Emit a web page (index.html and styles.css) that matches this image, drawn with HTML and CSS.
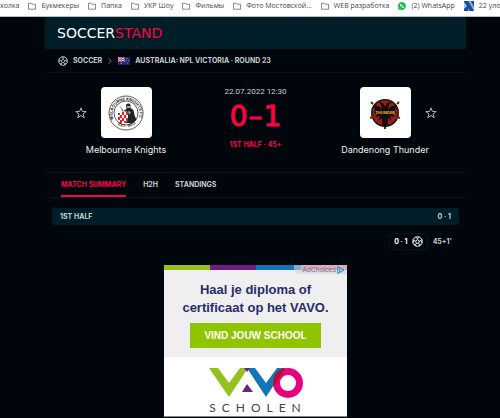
FILE: index.html
```html
<!DOCTYPE html>
<html lang="en">
<head>
    <meta charset="UTF-8">
    <meta name="viewport" content="width=device-width, initial-scale=1.0">
    <title>Melbourne Knights - Dandenong Thunder</title>
    <link rel="stylesheet" href="styles.css">
</head>
<body>
    <!-- Shared icons -->
    <svg class="sprite" width="0" height="0" aria-hidden="true">
        <symbol id="folder" viewBox="0 0 8 8">
            <path d="M.5 1.2h2.6l.8 1h3.6v5H.5z" fill="none" stroke="#6b6e72" stroke-width=".8"/>
        </symbol>
        <symbol id="ball" viewBox="0 0 24 24">
            <g fill="none" stroke="currentColor" stroke-width="2">
                <circle cx="12" cy="12" r="10.5"/>
                <path d="M12 8l4 3-1.5 5h-5L8 11zM12 8V5M16 11l3-1M14.500 16l2 3M9.500 16l-2 3M8 11l-3-1M8 3l4 2 4-2M22 8l-3 2 3 5M19 18l-2.500 1-1.500 3M9 22l-1.500-3L5 18M2 15l3-5-3-2"/>
            </g>
        </symbol>
        <symbol id="star" viewBox="0 0 12 12">
            <path d="M6 .8l1.300 3.600 3.900.1-3.100 2.400 1.100 3.800L6 8.500l-3.200 2.200 1.100-3.800L.8 4.500l3.900-.1z" fill="none" stroke="#c3c9cb" stroke-width=".9"/>
        </symbol>
    </svg>

    <!-- Bookmarks -->
    <nav class="bookmarks">
        <a href="#">холка</a>
        <a href="#"><svg class="folder"><use href="#folder"/></svg>Букмекеры</a>
        <a href="#"><svg class="folder"><use href="#folder"/></svg>Папка</a>
        <a href="#"><svg class="folder"><use href="#folder"/></svg>УКР Шоу</a>
        <a href="#"><svg class="folder"><use href="#folder"/></svg>Фильмы</a>
        <a href="#"><svg class="folder"><use href="#folder"/></svg>Фото Мостовской...</a>
        <a href="#"><svg class="folder"><use href="#folder"/></svg>WEB разработка</a>
        <a href="#">
            <svg class="folder" viewBox="0 0 16 16">
                <path d="M8 0a8 8 0 1 1-4 15L0 16l1-4A8 8 0 0 1 8 0z" fill="#18c04f"/>
                <path d="M5 4l1.500 0 1 2.200-.8 1.100c.6 1 1.400 1.700 2.400 2.200l1-1 2.100 1.200c0 1.600-1.300 2.300-2.600 2C7 11 4.500 8.500 4 6.200 4 5.200 4.500 4.400 5 4z" fill="#fff"/>
            </svg>(2) WhatsApp</a>
        <a href="#">
            <svg class="site-icon" viewBox="0 0 10 10">
                <path d="M0 0h10v10H0z" fill="#7fa6d6"/>
                <path d="M0 0h4l6 10H6L4 7v3H0V5l1 0zM7 0h3v6z" fill="#174c9a"/>
                <path d="M0 1l3 4-3 3z" fill="#a9c6e8"/>
            </svg>22 улов</a>
    </nav>

    <div class="page">
        <header class="site-header">
            <a class="logo" href="#">SOCCER<span>STAND</span></a>
        </header>

        <nav class="breadcrumb">
            <svg class="ball-small"><use href="#ball"/></svg>
            <a href="#">SOCCER</a>
            <svg class="chevron" viewBox="0 0 4 6"><path d="M.5.5L3.300 3 .5 5.500" fill="none" stroke="#8b9599" stroke-width=".8"/></svg>
            <svg class="flag" viewBox="0 0 11 7">
                <path d="M0 0h11v7H0z" fill="#272a72"/>
                <path d="M0 0l6 4M6 0L0 4" stroke="#ddd" stroke-width=".9"/>
                <path d="M3 0v4M0 2h6" stroke="#fff" stroke-width="1.500"/>
                <path d="M3 0v4M0 2h6" stroke="#e02f48" stroke-width=".8"/>
                <path d="M2.500 5h1v1h-1zM8 1h.7v.7H8zM9.500 2.500h.7v.7h-.7zM7 3h.7v.7H7zM8.200 5.200h.7v.7h-.7z" fill="#c9cbe0"/>
            </svg>
            <a href="#">AUSTRALIA: NPL VICTORIA · ROUND 23</a>
        </nav>

        <!-- Match -->
        <main>
            <section class="match">
                <div class="team">
                    <div class="team-row">
                        <button class="favourite" aria-label="Add Melbourne Knights"><svg><use href="#star"/></svg></button>
                        <div class="crest">
                            <svg viewBox="0 0 36 36">
                                <defs><path id="ring" d="M5.500 24A13.500 13.500 0 1 1 30.500 24"/><path id="ring-low" d="M5 25A15.500 15.500 0 0 0 31 25"/></defs>
                                <circle cx="18" cy="18" r="17" fill="#fff" stroke="#333" stroke-width=".8"/>
                                <circle cx="18" cy="18" r="12" fill="none" stroke="#333" stroke-width=".8"/>
                                <text font-size="4" font-weight="700" fill="#222"><textPath href="#ring">MELBOURNE KNIGHTS FC</textPath></text>
                                <text font-size="4" font-weight="700" fill="#222"><textPath href="#ring-low" startOffset="22%">EST. 1953</textPath></text>
                                <path d="M18 10c1-2 4-2 4.500 0v3l3 2 1 5 2 5-4 3h-7l1-7-3-3-4-8 4 6 3-2z" fill="#222"/>
                                <path d="M19 11h3v2h-3zM20 16l3 1-2 3z" fill="#aaa"/>
                                <path d="M10 18q5-3 10-1v8q-2 3-5 4-5-3-5-6z" fill="#fff"/>
                                <path d="M10 18h2v2h-2zM14 17h2v3h-2zM18 17h2v3h-2zM12 20h2v3h-2zM16 20h2v3h-2zM10 22h2v3h-2zM14 23h2v3h-2zM18 23h2v3h-2zM12 25h2v3h-2zM16 26h2v2h-2z" fill="#e2202b"/>
                            </svg>
                        </div>
                    </div>
                    <a href="#">Melbourne Knights</a>
                </div>

                <div class="result">
                    <time datetime="2022-07-22T12:30">22.07.2022 12:30</time>
                    <div class="score"><span>0</span><span>–</span><span>1</span></div>
                    <p>1ST HALF · 45+</p>
                </div>

                <div class="team away">
                    <div class="team-row">
                        <button class="favourite" aria-label="Add Dandenong Thunder"><svg><use href="#star"/></svg></button>
                        <div class="crest">
                            <svg viewBox="0 0 36 36">
                                <circle cx="18" cy="18" r="13" fill="#9e1b1c" stroke="#24150f" stroke-width="2"/>
                                <circle cx="18" cy="18" r="12" fill="none" stroke="#d54b22" stroke-width=".7" stroke-dasharray="2 2"/>
                                <path d="M18 12l-2-4-4-1 2 3 1 4-4-3-5-1 2 4-1 5 5-2-4 5 5-1-2 5 4-3v6l3 5 3-5v-6l4 3-2-5 5 1-4-5 5 2-1-5 2-4-5 1-4 3 1-4 2-3-4 1z" fill="#160c0b"/>
                                <path d="M4 7l2 2M32 7l-2 2M3 23l3-1M33 23l-3-1M18 32v2" stroke="#4a3512" stroke-width="2"/>
                                <text x="18" y="19" text-anchor="middle" font-size="4" font-weight="700" fill="#e0b622">THUNDER</text>
                            </svg>
                        </div>
                    </div>
                    <a href="#">Dandenong Thunder</a>
                </div>
            </section>

            <nav class="tabs">
                <a class="active" href="#">MATCH SUMMARY</a>
                <a href="#">H2H</a>
                <a href="#">STANDINGS</a>
            </nav>

            <section class="summary">
                <div class="period"><span>1ST HALF</span><span>0 · 1</span></div>
                <div class="incident">
                    <div class="goal">0 · 1 <svg><use href="#ball"/></svg></div>
                    <span>45+1'</span>
                </div>
            </section>

            <!-- Banner -->
            <aside class="banner">
                <div class="stripes"><i></i><i></i><i></i><i></i></div>
                <a class="choices" href="#">AdChoices
                    <svg viewBox="0 0 8 8"><path d="M.8.6L7 4 .8 7.400z" fill="none" stroke="#168fc4" stroke-width="1"/><path d="M2.800 3v3" stroke="#168fc4"/></svg>
                </a>
                <div class="offer">
                    <h2>Haal je diploma of<br>certificaat op het VAVO.</h2>
                    <button>VIND JOUW SCHOOL</button>
                </div>
                <div class="school">
                    <svg viewBox="0 0 94 31">
                        <path d="M0 0h9l11 15L31 0h8L20 29z" fill="#95c11f"/>
                        <path d="M38 0h8l11 15L68 0h8L57 29z" fill="#1076b8"/>
                        <path d="M35 0h6l-3 4zM33 24l5-8 6 8z" fill="#652483"/>
                        <circle cx="79" cy="15" r="11.500" fill="none" stroke="#e6007e" stroke-width="7"/>
                        <path d="M68 0h8L64.500 17.500Q63 7 71 2z" fill="#1076b8"/>
                        <path d="M76.500 0L64.500 18.500Q63 6 71 2 74 0 76.500 0z" fill="#b30d27"/>
                    </svg>
                    <p>SCHOLEN</p>
                </div>
            </aside>
        </main>
    </div>
</body>
</html>
```
FILE: styles.css
```css
/* Global styles */
* {
    box-sizing: border-box;
}

body {
    margin: 0;
    background-color: #00070c;
    color: #c8cdcf;
    font-family: Inter, sans-serif;
    font-size: 7px;
    line-height: 10px;
    overflow: hidden;
}

a {
    color: inherit;
    text-decoration: none;
}

svg {
    display: block;
    flex: none;
}

button {
    padding: 0;
    border: 0;
    cursor: pointer;
}

h2, p {
    margin: 0;
}

.sprite {
    position: absolute;
}

/* Bookmarks */
.bookmarks {
    display: flex;
    gap: 9px;
    height: 17px;
    padding-bottom: 4px;
    overflow: hidden;
    background: #fff;
    border-bottom: 1px solid #b9bec1;
    color: #44474b;
    font-family: "Open Sans", sans-serif;
    white-space: nowrap;
}

.bookmarks a {
    display: flex;
    flex: none;
    align-items: center;
    gap: 5px;
}

.folder {
    width: 8px;
    height: 8px;
}

.site-icon {
    width: 10px;
    height: 10px;
}

/* Header */
.page {
    padding: 0 34px 0 45px;
}

.site-header {
    display: flex;
    align-items: center;
    height: 32px;
    padding-left: 12px;
    background: #001e28;
}

.logo {
    color: #fff;
    font-family: "DejaVu Sans", sans-serif;
    font-size: 14px;
    line-height: 16px;
}

.logo span {
    color: #ff0046;
}

.breadcrumb {
    display: flex;
    align-items: center;
    height: 24px;
    padding-left: 13px;
    border-bottom: 1px solid #001318;
    font-weight: 700;
}

.ball-small {
    width: 10px;
    height: 10px;
    margin-right: 5px;
}

.chevron {
    width: 4px;
    height: 6px;
    margin: 0 6px;
}

.flag {
    width: 12px;
    height: 8px;
    margin-right: 5px;
}

/* Match */
.match {
    display: grid;
    grid-template-columns: 162px 1fr 162px;
    height: 100px;
    padding-top: 14px;
    border-bottom: 1px solid #001a20;
}

.team {
    display: flex;
    flex-direction: column;
    align-items: center;
    gap: 5px;
    color: #eee;
    font-size: 9px;
    line-height: 14px;
}

.team-row {
    display: flex;
    align-items: center;
    gap: 14px;
    padding-right: 26px;
}

.away .team-row {
    flex-direction: row-reverse;
    padding: 0 0 0 26px;
}

.favourite {
    background: none;
}

.favourite svg {
    width: 12px;
    height: 12px;
}

.crest {
    display: grid;
    place-items: center;
    width: 51px;
    height: 51px;
    background: #fff;
    border-radius: 4px;
}

.crest svg {
    width: 36px;
    height: 36px;
}

.result {
    text-align: center;
}

.result time {
    font-family: Roboto, sans-serif;
    font-size: 8px;
}

.score {
    display: flex;
    justify-content: center;
    gap: 1px;
    margin: 4px 0 7px;
    color: #ff0046;
    font: 28px/32px "DejaVu Sans", sans-serif;
    -webkit-text-stroke: 1px #ff0046;
}

.result p {
    color: #ff0046;
    font-weight: 700;
}

/* Tabs */
.tabs {
    display: flex;
    gap: 17px;
    height: 25px;
    padding-left: 16px;
    border-bottom: 1px solid #001a20;
    font-weight: 700;
    line-height: 24px;
}

.tabs .active {
    color: #ff0046;
    border-bottom: 2px solid #ff0046;
}

/* Summary */
.summary {
    padding: 10px 7px 0;
    font-weight: 700;
}

.period {
    display: flex;
    align-items: center;
    justify-content: space-between;
    height: 17px;
    padding: 0 8px;
    background: #001e28;
    border-radius: 2px;
}

.incident {
    display: flex;
    align-items: center;
    justify-content: flex-end;
    gap: 5px;
    padding: 8px 7px 0 0;
}

.goal {
    display: flex;
    align-items: center;
    gap: 4px;
    height: 17px;
    padding: 0 4px;
    border: 1px solid #001a20;
    border-radius: 4px;
    color: #fff;
}

.goal svg {
    width: 11px;
    height: 11px;
}

/* Banner */
.banner {
    position: relative;
    width: 183px;
    margin: 15px auto 0 119px;
    background: #fff;
    border-bottom: 1px solid #888;
    font-family: "Liberation Sans", sans-serif;
    text-align: center;
}

.stripes {
    display: grid;
    grid-template-columns: repeat(4, 1fr);
    height: 5px;
    background: #f469a5;
}

.stripes i:nth-child(1) {
    background: #95c11f;
}

.stripes i:nth-child(2) {
    background: #731982;
}

.stripes i:nth-child(3) {
    background: #1076b8;
}

.choices {
    position: absolute;
    top: 0;
    right: 0;
    display: flex;
    align-items: center;
    gap: 1px;
    padding: 0 2px 0 8px;
    background: rgba(205, 210, 218, 0.6);
    border-radius: 0 0 0 6px;
    color: #777;
    line-height: 9px;
}

.choices svg {
    width: 8px;
    height: 8px;
}

.offer {
    padding: 11px 0 9px;
    background: #efefef;
}

.offer h2 {
    color: #292c69;
    font-size: 13px;
    line-height: 18px;
}

.offer button {
    width: 131px;
    height: 25px;
    margin-top: 6px;
    background: #8fc400;
    color: #fff;
    font: bold 10px/25px "Liberation Sans", sans-serif;
}

.school {
    padding-top: 11px;
}

.school svg {
    width: 94px;
    height: 31px;
    margin: 0 auto;
}

.school p {
    padding: 2px 0 2px 5px;
    color: #444;
    font-family: Lato, sans-serif;
    font-size: 12px;
    line-height: 13px;
    letter-spacing: 6px;
}
```
